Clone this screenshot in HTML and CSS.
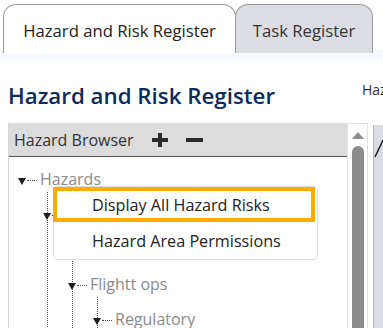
FILE: index.html
```html
<!DOCTYPE html>
<html lang="en">
<head>
    <meta charset="UTF-8">
    <meta name="viewport" content="width=device-width, initial-scale=1.0">
    <title>Hazard and Risk Register</title>
    <link rel="stylesheet" href="styles.css">
</head>
<body>

<div class="tabs">
    <div class="tab active">Hazard and Risk Register</div>
    <div class="tab">Task Register</div>
</div>
<div class="tab-band"></div>

<div class="page">
    <div class="title-row">
        <h1 class="page-title">Hazard and Risk Register</h1>
        <div class="side-title">Hazard Risks</div>
    </div>

    <div class="work-row">
        <div class="browser">
            <div class="browser-header">
                <span>Hazard Browser</span>
                <button class="icon-btn" title="Add">
                    <svg width="18" height="14" viewBox="0 0 18 14"><path d="M9 0v14M1 7h16" stroke="#2b2b2b" stroke-width="4"/></svg>
                </button>
                <button class="icon-btn" title="Remove">
                    <svg width="18" height="14" viewBox="0 0 18 14"><path d="M1 7h17" stroke="#2b2b2b" stroke-width="4"/></svg>
                </button>
            </div>
            <div class="tree-wrap">
                <ul class="tree">
                    <li>
                        <div class="node"><span class="caret"></span><span class="dash"></span><span class="label">Hazards</span></div>
                        <ul>
                            <li>
                                <div class="node"><span class="caret"></span><span class="dash"></span><span class="label">Aerodrome</span></div>
                                <ul>
                                    <li>
                                        <div class="node"><span class="caret"></span><span class="dash"></span><span class="label">Cabin</span></div>
                                    </li>
                                    <li>
                                        <div class="node"><span class="caret"></span><span class="dash"></span><span class="label">Flightt ops</span></div>
                                        <ul>
                                            <li>
                                                <div class="node"><span class="caret"></span><span class="dash"></span><span class="label">Regulatory</span></div>
                                            </li>
                                        </ul>
                                    </li>
                                </ul>
                            </li>
                            <li>
                                <div class="node"><span class="caret"></span><span class="dash"></span><span class="label">Maintenance</span></div>
                            </li>
                        </ul>
                    </li>
                </ul>

                <div class="context-menu">
                    <div class="menu-item selected">Display All Hazard Risks</div>
                    <div class="menu-item">Hazard Area Permissions</div>
                </div>
            </div>
        </div>

        <div class="scrollbar">
            <div class="scroll-up"></div>
            <div class="scroll-thumb"></div>
        </div>

        <div class="detail">
            <svg width="10" height="40" viewBox="0 0 10 40"><path d="M1 32L9 15" stroke="#111" stroke-width="1.4"/></svg>
        </div>
    </div>
</div>

</body>
</html>
```

FILE: styles.css
```css
html, body {
    margin: 0;
    height: 100%;
    overflow: hidden;
}

body {
    background-color: white;
    font-family: "Open Sans", "Liberation Sans", sans-serif;
    color: #2a2a2a;
}

.tabs {
    display: flex;
    padding: 4px 0 0 3px;
    height: 49px;
    box-sizing: border-box;
}

.tab {
    height: 49px;
    box-sizing: border-box;
    border: 1px solid #999;
    border-bottom: none;
    border-radius: 13px 13px 0 0;
    font-size: 16.7px;
    display: flex;
    align-items: center;
    justify-content: center;
    padding-top: 3px;
    background-color: #dcdde3;
    color: #333;
}

.tab.active {
    width: 233px;
    background-color: white;
    color: #222;
}

.tab + .tab {
    width: 138px;
    margin-left: -1px;
}

.tab-band {
    height: 12px;
    background-color: #f8f9fc;
}

.page {
    padding-left: 8px;
}

.title-row {
    display: flex;
    align-items: flex-start;
    height: 62px;
    white-space: nowrap;
}

.page-title {
    margin: 0;
    width: 354px;
    flex-shrink: 0;
    padding-top: 20px;
    font-size: 22.3px;
    font-weight: 600;
    color: #0b2c5d;
    line-height: 30px;
}

.side-title {
    padding-top: 19px;
    font-size: 14px;
    color: #333;
}

.work-row {
    display: flex;
}

.browser {
    width: 339px;
    flex-shrink: 0;
    border-left: 1px solid #d4d4d4;
    box-sizing: border-box;
}

.browser-header {
    height: 34px;
    box-sizing: border-box;
    background-color: #dcdcdc;
    border-bottom: 1px solid #555;
    display: flex;
    align-items: center;
    padding-left: 5px;
    font-size: 16px;
    color: #333;
}

.icon-btn {
    background: none;
    border: none;
    padding: 0;
    margin-left: 17px;
    display: flex;
    cursor: pointer;
}

.icon-btn + .icon-btn {
    margin-left: 16px;
}

.tree-wrap {
    position: relative;
    height: 200px;
    padding-top: 6px;
}

.tree, .tree ul {
    list-style: none;
    margin: 0;
    padding: 0;
}

.tree {
    padding-left: 9px;
}

.tree ul {
    margin-left: 29px;
    margin-top: -6px;
    padding-top: 6px;
    border-left: 1px dotted #444;
}

.tree ul > li {
    margin-left: -5px;
}

.node {
    height: 35px;
    display: flex;
    align-items: center;
}

.caret {
    width: 0;
    height: 0;
    border-left: 4.5px solid transparent;
    border-right: 4.5px solid transparent;
    border-top: 7px solid #1e1e1e;
    margin-top: 2px;
}

.dash {
    width: 10px;
    border-top: 1px dotted #444;
    margin-left: 1px;
}

.label {
    margin-left: 3px;
    padding-bottom: 4px;
    font-size: 16px;
    color: #8a8a8a;
}

/* context menu over the tree */
.context-menu {
    position: absolute;
    left: 44px;
    top: 29px;
    width: 265px;
    height: 74px;
    box-sizing: border-box;
    background-color: white;
    border: 1px solid #ddd;
    border-radius: 5px;
}

.menu-item {
    height: 30px;
    padding-left: 35px;
    font-size: 16.2px;
    color: #222;
    display: flex;
    align-items: center;
    border: 4px solid transparent;
    margin-right: 2px;
    margin-left: -1px;
}

.menu-item.selected {
    height: 35px;
    box-sizing: border-box;
    border-color: #ffab00;
    padding-top: 1px;
}

.scrollbar {
    width: 21px;
    height: 205px;
    flex-shrink: 0;
    box-sizing: border-box;
    border: 1px solid #e2e2e2;
    border-bottom: none;
    display: flex;
    flex-direction: column;
    align-items: center;
    padding-top: 8px;
}

.scroll-up {
    width: 0;
    height: 0;
    border-left: 6px solid transparent;
    border-right: 6px solid transparent;
    border-bottom: 7px solid #8c8c8c;
}

.scroll-thumb {
    margin-top: 7px;
    width: 12px;
    flex: 1;
    background-color: #8c8c8c;
    border-radius: 6px 6px 0 0;
}

.detail {
    flex: 1;
    margin-left: 5px;
    margin-top: 2px;
    border-left: 1px solid #b5b5b5;
    background-color: #dcdde3;
    height: 205px;
}
```
